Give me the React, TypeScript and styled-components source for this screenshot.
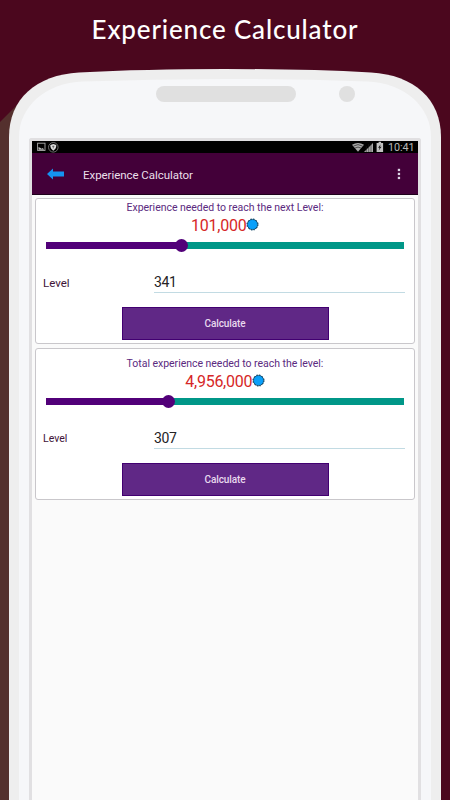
import React from 'react';
import styled, { createGlobalStyle } from 'styled-components';

const GlobalStyle = createGlobalStyle`
  * { box-sizing: border-box; }
  body { margin: 0; background: #4b071e; overflow: hidden; }
`;

const Page = styled.main`
  position: relative;
  display: flex;
  flex-direction: column;
  width: 450px;
  height: 800px;
  overflow: hidden;
  background: #4b071e;
  font-family: Roboto, "Liberation Sans", sans-serif;
`;

const Backdrop = styled.svg`
  position: absolute;
  inset: 0;
`;

const Title = styled.h1`
  position: relative;
  margin: 0;
  height: 69px;
  padding-top: 11px;
  text-align: center;
  color: #fff;
  font: 500 26px/36px Lato, sans-serif;
  letter-spacing: 0.83px;
  white-space: nowrap;
`;

const PhoneTop = styled.div`
  position: relative;
  display: flex;
  height: 69px;
  padding: 17px 0 0 156px;
  gap: 43px;
`;

const Speaker = styled.div`
  width: 140px;
  height: 16px;
  border-radius: 8px;
  background: #e0e0e0;
`;

const Camera = styled.div`
  width: 16px;
  height: 16px;
  border-radius: 50%;
  background: #e0e0e0;
`;

const Screen = styled.section`
  position: relative;
  flex: 1;
  display: flex;
  flex-direction: column;
  margin: 0 29px;
  border: 3px solid #e1e0e2;
  border-bottom: 0;
  border-radius: 3px 3px 0 0;
  background: #fafafa;
`;

const StatusBar = styled.div`
  display: flex;
  align-items: center;
  height: 12px;
  padding: 0 4px 0 5px;
  background: #000;
  color: #b9b9b9;
  font-size: 11px;
  line-height: 12px;
`;

const Spacer = styled.span`
  flex: 1;
`;

const Clock = styled.span`
  width: 26px;
  margin-left: 3px;
  padding-top: 2px;
  font-size: 10.8px;
  letter-spacing: -0.1px;
  white-space: nowrap;
`;

const AppBar = styled.header`
  display: flex;
  align-items: center;
  height: 42px;
  padding: 0 17px 0 15px;
  border-bottom: 1px solid #1d001a;
  background: #430039;
`;

const AppTitle = styled.h2`
  flex: 1;
  margin: 2px 0 0 19px;
  color: #eadfea;
  font-size: 11.5px;
  font-weight: 400;
  letter-spacing: -0.05px;
`;

const Cards = styled.div`
  display: flex;
  flex-direction: column;
  gap: 4px;
  padding: 3px 3px 0;
`;

const Card = styled.article<{ $top: number }>`
  display: flex;
  flex-direction: column;
  align-items: center;
  padding: ${({ $top }) => $top}px 0 3px;
  border: 1px solid #c9c7cb;
  border-radius: 3px;
  background: #fff;
`;

const Caption = styled.div`
  color: #5b2a80;
  font-size: 10.5px;
  line-height: 14px;
  letter-spacing: -0.03px;
  white-space: nowrap;
`;

const Result = styled.div`
  display: flex;
  align-items: center;
  height: 20px;
  padding-top: 1px;
  color: #d62727;
  font-size: 16px;
  line-height: 20px;
  letter-spacing: -0.25px;
`;

const Slider = styled.div`
  display: flex;
  align-items: center;
  width: 358px;
  height: 13px;
  margin-top: 4px;
`;

const Track = styled.span<{ $width?: number }>`
  flex: ${({ $width }) => ($width ? `0 0 ${$width}px` : '1')};
  height: 7px;
  background: ${({ $width }) => ($width ? '#520079' : '#009788')};
`;

const Thumb = styled.span`
  position: relative;
  width: 13px;
  height: 13px;
  margin: 0 -6px 0 -6px;
  border-radius: 50%;
  background: #520079;
`;

const Field = styled.label`
  display: flex;
  align-items: flex-end;
  align-self: stretch;
  height: 41px;
  padding: 0 9px 0 7px;
`;

const Label = styled.span<{ $size: number }>`
  width: 111px;
  padding-bottom: 3px;
  color: #401438;
  font-size: ${({ $size }) => $size}px;
  line-height: 14px;
`;

const Value = styled.span`
  flex: 1;
  height: 21px;
  border-bottom: 1px solid #c2dbe3;
  color: #252325;
  font-size: 14px;
  line-height: 20px;
  letter-spacing: -0.35px;
`;

const Button = styled.button`
  width: 207px;
  height: 33px;
  margin-top: 14px;
  padding: 1px 0 0;
  border: 1px solid #420071;
  border-radius: 0;
  background: #602886;
  color: #e8d9ee;
  font: 500 10px/14px Roboto, sans-serif;
  letter-spacing: -0.1px;
`;

const BadgeIcon = styled.svg`
  margin: -3px 0 0 -0.5px;
`;

const Badge = () => (
  <BadgeIcon width="13" height="13" viewBox="-6.5 -6.5 13 13">
    <circle r="5.1" fill="#0796ed" stroke="#13577f" />
    <circle r="5.6" fill="none" stroke="#164965" strokeWidth="1" strokeDasharray="1.4 1.53" />
    <circle r="4.3" fill="#0aa0fa" />
  </BadgeIcon>
);

const StatusLeft = () => (
  <svg width="24" height="12" viewBox="0 0 24 12" fill="none">
    <rect x=".6" y="2.2" width="7.4" height="7.3" stroke="#aaa" strokeWidth=".9" />
    <path d="M1.5 8.7V6l2.1 1 1 .7 1.2-.7L7.2 8.7Z" fill="#bbb" />
    <circle cx="16.3" cy="6.3" r="4.8" stroke="#888" strokeWidth=".8" />
    <path d="m16.3 3 3 1.1c0 2.8-1 4.4-3 5.6-2-1.2-3-2.8-3-5.6Z" fill="#ddd" />
    <path d="M16.3 4.8v2.6M15.2 5.3h2.2" stroke="#555" strokeWidth=".8" />
  </svg>
);

const StatusRight = () => (
  <svg width="33" height="12" viewBox="0 0 33 12">
    <path d="M0 3.7Q6 .1 12 3.7L6 10.8Z" fill="#aaa" />
    <path d="M1.4 5.1Q6 2.1 10.6 5.1M3 7.1Q6 5 9 7.1" fill="none" stroke="#333" strokeWidth=".8" />
    <path d="M12 11 21 2v9Z" fill="#aaa" />
    <path d="M14.3 5v6M16.7 3v8M19 2v9" stroke="#222" strokeWidth=".5" />
    <path d="M24.6 2h2V.8h2.5V2h2v9h-6.5Z" fill="#c2c2c2" />
    <path d="m28.7 3.2-2.6 3.5h1.5l-.9 2.9 2.8-3.9h-1.6Z" fill="#111" />
  </svg>
);

interface CalculatorProps {
  caption: string;
  result: string;
  level: string;
  progress: number;
  top: number;
  labelSize: number;
}

const Calculator = ({ caption, result, level, progress, top, labelSize }: CalculatorProps) => (
  <Card $top={top}>
    <Caption>{caption}</Caption>
    <Result>{result}<Badge /></Result>
    <Slider>
      <Track $width={progress} />
      <Thumb />
      <Track />
    </Slider>
    <Field>
      <Label $size={labelSize}>Level</Label>
      <Value>{level}</Value>
    </Field>
    <Button type="button">Calculate</Button>
  </Card>
);

export default function App() {
  return (
    <Page>
      <GlobalStyle />
      <Backdrop width="450" height="800" viewBox="0 0 450 800">
        <path d="M0 122 26 96v704H0Z" fill="#54302d" />
        <path d="M9 800V137C9 99 36 75 79 72.5Q145 69 225 69T371 72.5C414 75 441 99 441 137V800Z" fill="#eee" />
        <path d="M19 800V137C19 107 45 83 83 81.5Q153 79 225 79T367 81.5C405 83 431 107 431 137V800Z" fill="#f6f7f9" />
      </Backdrop>
      <Title>Experience Calculator</Title>
      <PhoneTop><Speaker /><Camera /></PhoneTop>
      <Screen>
        <StatusBar>
          <StatusLeft />
          <Spacer />
          <StatusRight />
          <Clock>10:41</Clock>
        </StatusBar>
        <AppBar>
          <svg width="17" height="12" viewBox="0 0 17 12">
            <path d="M0 6 6 .4v3.2h11v5H6v3Z" fill="#1593f0" />
          </svg>
          <AppTitle>Experience Calculator</AppTitle>
          <svg width="4" height="12" viewBox="0 0 4 12" fill="#ddd5e7">
            <rect x=".8" y=".8" width="2.3" height="2.3" />
            <rect x=".8" y="4.8" width="2.3" height="2.3" />
            <rect x=".8" y="8.8" width="2.3" height="2.3" />
          </svg>
        </AppBar>
        <Cards>
          <Calculator caption="Experience needed to reach the next Level:" result="101,000" level="341" progress={135} top={2} labelSize={11.5} />
          <Calculator caption="Total experience needed to reach the level:" result="4,956,000" level="307" progress={122} top={8} labelSize={10.5} />
        </Cards>
      </Screen>
    </Page>
  );
}
